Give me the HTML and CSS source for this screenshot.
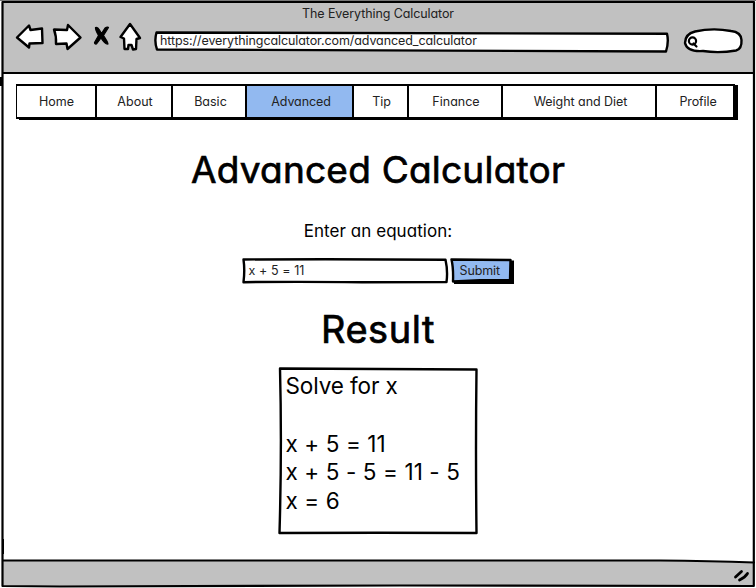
FILE: index.html
```html
<!DOCTYPE html>
<html lang="en">
<head>
<meta charset="utf-8">
<title>The Everything Calculator</title>
<link rel="stylesheet" href="styles.css">
</head>
<body>
<div class="window">
  <svg class="frame" viewBox="0 0 756 588" aria-hidden="true">
    <path class="edge" d="M0 .5H756"/>
    <path class="bar" d="M2.500 2H754V73L380 73.500L2.500 72.500Z"/>
    <path class="bar" d="M2.500 560.500L660 560.500Q710 561 754 562.500V586H2.500Z"/>
    <path class="line" d="M2.500 2L754 2L753.800 586L400 585.500L60 586.500L2.500 586Z"/>
    <path class="nick" d="M1 77v9M3 539v15"/>
  </svg>
  <header class="chrome">
    <div class="window-title">The Everything Calculator</div>
    <div class="toolbar">
      <svg class="nav-icons" viewBox="0 0 130 34" aria-hidden="true">
        <path class="icon" d="M2 14.500L14 2.500L15.500 7L27 5.500L27.500 20L14.500 20.500L14 24.500Z"/>
        <path class="icon" d="M39 6.500L52 7L53 2L65.500 14.500L52.500 26L51.500 20.500L41 21Q41.500 13 39 6.500Z"/>
        <path class="cross" d="M80.500 4.500Q82.500 3.500 84.500 7L86.500 10.500L90 5Q93 3.500 93.500 4.500L88.500 12.500Q93 19 93 21Q90 21.500 86 15L81.500 21Q79.500 21.500 79.500 19.500L83.500 12.500Q80 6.500 80.500 4.500Z"/>
        <path class="icon" d="M115 1L105.500 14L109 15.500L109.500 26H113L113.500 22L116.500 22L118 26.500L121 26L121.500 16L125 15Z"/>
      </svg>
      <div class="address">
        <svg class="sketch" viewBox="0 0 516 22" aria-hidden="true"><path class="field" d="M2.500 1.500L513 2.800Q515 11 512 20.500L3 18.500Q0 10 2.500 1.500Z"/></svg>
        <span>https://everythingcalculator.com/advanced_calculator</span>
      </div>
      <svg class="search" viewBox="0 0 62 28" aria-hidden="true">
        <path class="field" d="M12 4.500Q30 .500 48 4Q58 5 58.500 13Q59 22 53 23.500Q36 26.500 20 24Q4 25 2 16Q2 7 12 4.500Z"/>
        <circle class="lens" cx="9.500" cy="14" r="3.600"/><path class="lens" d="M10.500 16.500L13.500 19.500"/>
      </svg>
    </div>
  </header>
  <main class="page">
    <nav class="menu">
      <a class="item home">Home</a><a class="item about">About</a><a class="item basic">Basic</a><a class="item advanced">Advanced</a><a class="item tip">Tip</a><a class="item finance">Finance</a><a class="item weight">Weight and Diet</a><a class="item profile">Profile</a>
    </nav>
    <h1>Advanced Calculator</h1>
    <p class="prompt">Enter an equation:</p>
    <form class="entry">
      <div class="equation">
        <svg class="sketch" viewBox="0 0 206 26" aria-hidden="true"><path class="field" d="M1.500 1.500Q100 .800 203.500 1.800Q206 13 204.500 24L120 24.200Q50 23.500 1.500 24.200Q3 12 1.500 1.500Z"/></svg>
        <span>x + 5 = 11</span>
      </div>
      <div class="submit">
        <svg class="sketch" viewBox="0 0 65 26" aria-hidden="true"><path class="shade" d="M4 3L64 2.500V26H4Z"/><path class="button" d="M1.500 1.500L60.500 2L60 22L30 22.300L3 23.500Q3.500 10 1.500 1.500Z"/></svg>
        <span>Submit</span>
      </div>
    </form>
    <h2>Result</h2>
    <section class="result">
      <svg class="sketch" viewBox="0 0 201 168" aria-hidden="true"><path class="field" d="M2 1.500L198.500 2.500Q197.500 80 198.500 166L100 165.800L1.500 166Q4 80 2 1.500Z"/></svg>
      <p class="lead">Solve for x</p>
      <p>&nbsp;</p>
      <p>x + 5 = 11</p>
      <p>x + 5 - 5 = 11 - 5</p>
      <p>x = 6</p>
    </section>
  </main>
  <footer class="status">
    <svg class="footline" viewBox="0 0 756 28" preserveAspectRatio="none" aria-hidden="true"><path class="line" d="M3 .500H660Q710 1 754 2.500"/></svg>
    <svg class="grip" viewBox="0 0 18 16" aria-hidden="true"><path class="grip-line" d="M2.500 9L8.500 3.500M6.500 12Q12 9.500 14.500 5.500"/></svg>
  </footer>
</div>
</body>
</html>
```
FILE: styles.css
```css
* { box-sizing: border-box; }
body { margin: 0; background: #fff; color: #000; font: 12.5px/16px Inter, "Liberation Sans", sans-serif; font-feature-settings: "cv11"; overflow: hidden; }
h1, h2, p { margin: 0; font-weight: 400; }
svg { display: block; overflow: visible; fill: none; stroke-linejoin: round; stroke-linecap: round; }
.window { position: relative; isolation: isolate; width: 756px; height: 588px; display: flex; flex-direction: column; }
.frame { position: absolute; inset: 0; z-index: -1; }
.edge { stroke: #777; stroke-width: 1; }
.bar { fill: #c1c1c1; }
.line { stroke: #000; stroke-width: 2.2; }
.nick { stroke: #000; stroke-width: 2; stroke-linecap: butt; }
.chrome { height: 74px; border-bottom: 2px solid #000; margin: 0 2px; }
.window-title { height: 23px; padding-top: 6px; text-align: center; white-space: nowrap; color: #222; letter-spacing: -.09px; }
.toolbar { display: flex; padding-left: 13px; }
.nav-icons { width: 130px; height: 34px; flex: none; }
.icon, .field { fill: #fff; stroke: #000; stroke-width: 2.4; }
.cross { fill: #000; stroke: #000; stroke-width: 1.2; }
.address { position: relative; width: 516px; height: 22px; margin: 8px 0 0 9px; padding: 2px 0 0 6px; white-space: nowrap; letter-spacing: -.085px; color: #222; }
.sketch { position: absolute; inset: 0; width: 100%; height: 100%; z-index: -1; }
.search { width: 62px; height: 28px; margin: 4px 0 0 13px; }
.lens { stroke: #000; stroke-width: 2.2; }
.page { flex: 1; display: flex; flex-direction: column; align-items: center; }
.menu { display: flex; width: 719px; height: 35px; margin: 10px 5px 0 0; border: 2px solid #000; border-left-width: 1.5px; box-shadow: 3px 1px 0 #000; color: #222; background: #fff; }
.item { display: flex; align-items: center; justify-content: center; border-right: 2px solid #000; white-space: nowrap; }
.home { width: 80px; padding-left: 1px; } .about { width: 76px; padding-left: 2px; } .basic { width: 74px; padding-left: 3px; } .advanced { width: 107px; padding-left: 3px; background: #92b9f0; letter-spacing: -.1px; }
.tip { width: 55px; padding-left: 2px; } .finance { width: 94px; padding-left: 2px; } .weight { width: 154px; padding-left: 3px; letter-spacing: -.05px; } .profile { flex: 1; border: 0; padding-left: 6px; letter-spacing: -.1px; }
h1 { margin-top: 27px; font-size: 37px; line-height: 48px; white-space: nowrap; letter-spacing: .23px; -webkit-text-stroke: .7px #000; }
.prompt { margin-top: 25px; font-size: 17px; line-height: 24px; letter-spacing: .06px; }
.entry { display: flex; gap: 2px; margin-top: 15px; }
.equation { position: relative; width: 206px; height: 26px; padding: 5px 0 0 7px; color: #222; letter-spacing: .08px; }
.submit { position: relative; width: 65px; height: 26px; padding: 5px 0 0 11px; color: #222; margin-left: -1px; margin-right: 1px; letter-spacing: -.1px; }
.submit .sketch { left: 1px; }
.shade { fill: #000; }
.button { fill: #92b9f0; stroke: #000; stroke-width: 2.4; }
h2 { margin-top: 21px; font-size: 38px; line-height: 48px; letter-spacing: .55px; -webkit-text-stroke: .7px #000; }
.result { position: relative; width: 201px; height: 168px; margin-top: 14px; padding: 5px 0 0 8px; font-size: 22.5px; line-height: 28.8px; letter-spacing: .1px; white-space: nowrap; }
.result .lead { letter-spacing: -.1px; }
.status { height: 28px; display: flex; justify-content: flex-end; position: relative; }
.footline { position: absolute; inset: 0; width: 100%; height: 28px; }
.grip { width: 18px; height: 16px; margin: 8px 5px 0 0; }
.grip-line { stroke: #000; stroke-width: 2.8; }
```
